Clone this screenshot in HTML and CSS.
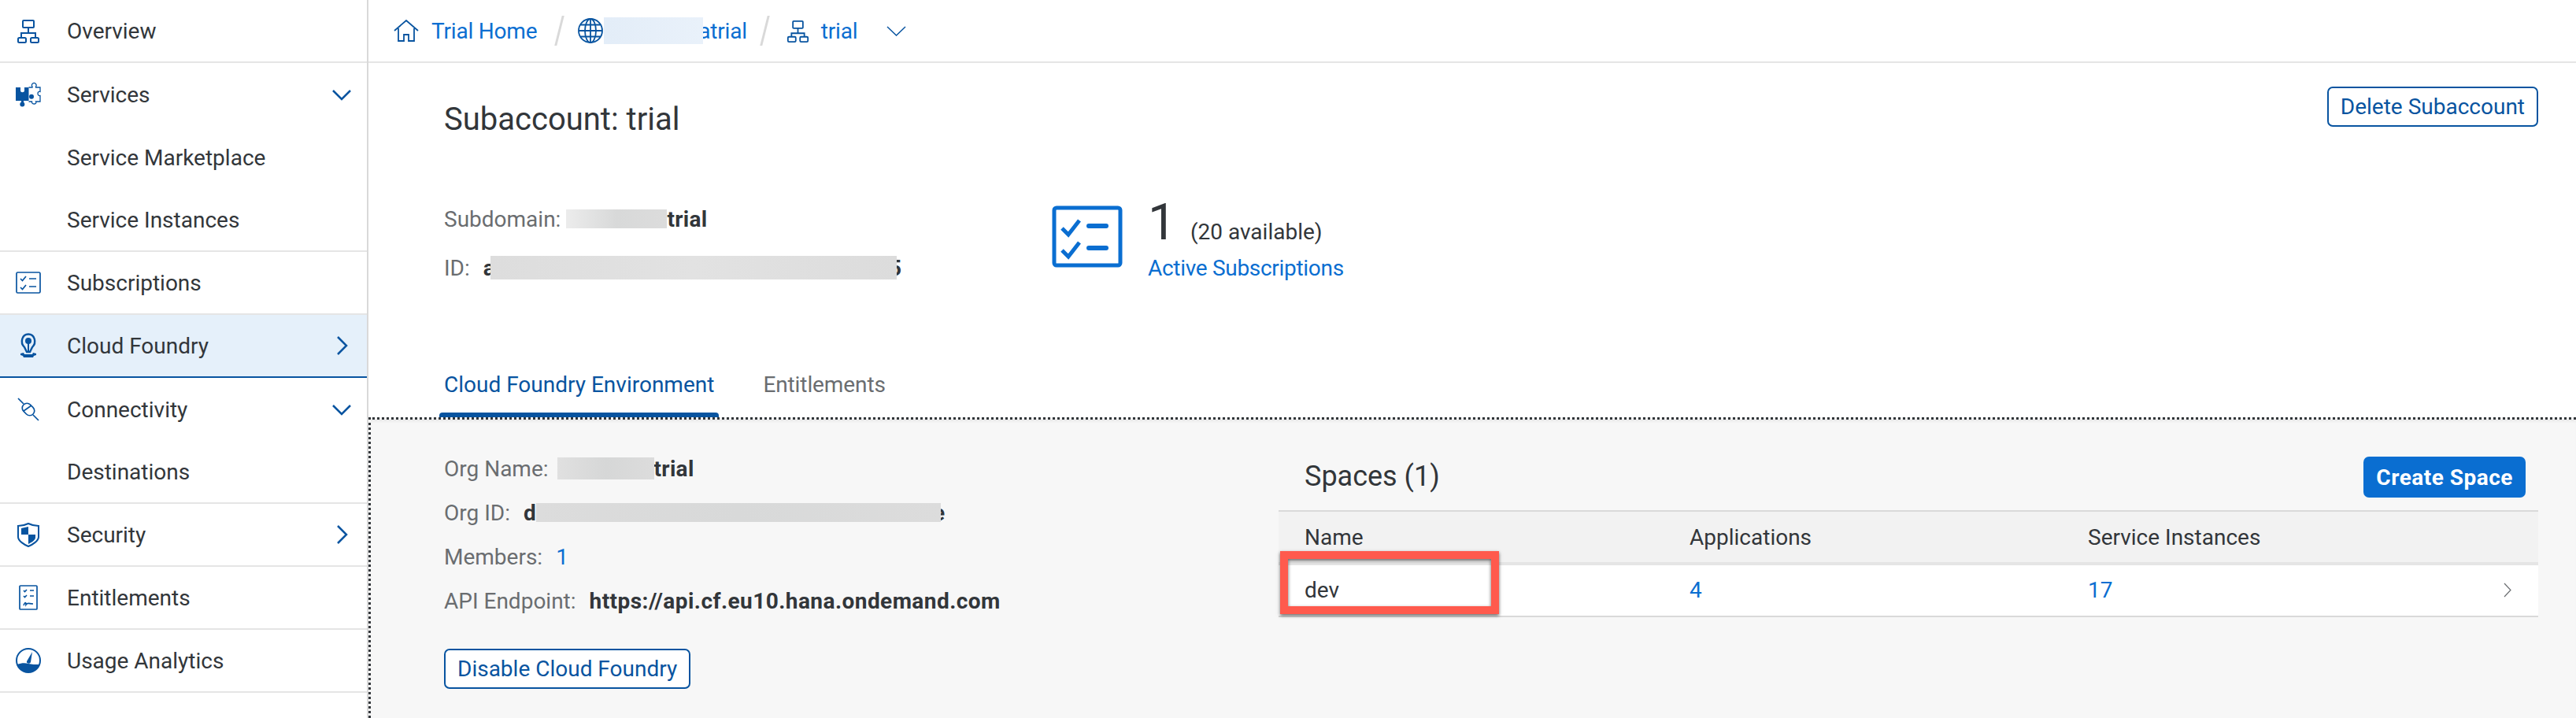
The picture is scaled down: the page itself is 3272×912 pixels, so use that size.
FILE: index.html
```html
<!DOCTYPE html>
<html lang="en">
<head>
    <meta charset="UTF-8">
    <title>Subaccount: trial</title>
    <link rel="stylesheet" href="styles.css">
</head>
<body>
    <nav class="sidebar">
        <a class="nav-row sep">
            <svg class="nav-icon" viewBox="0 0 32 32"><g fill="none" stroke="#0854a0" stroke-width="2"><rect x="9" y="3" width="14" height="9" rx="1"/><path d="M16 12v7M7 25v-6h18v6"/><rect x="3" y="25" width="10" height="6" rx="1.5"/><rect x="19" y="25" width="10" height="6" rx="1.5"/></g></svg>
            <span>Overview</span>
        </a>
        <a class="nav-row">
            <svg class="nav-icon" viewBox="0 0 32 32"><path fill="#0854a0" d="M0 7h6v4c0 3 5 3 5 0V7h5.500v17H10v2H7v-2H0z"/><circle cx="8.300" cy="28.500" r="3" fill="#0854a0"/><circle cx="20" cy="18.700" r="3" fill="#0854a0"/><path fill="none" stroke="#0854a0" stroke-width="1.300" d="M16.500 7H21V6a2.800 2.800 0 1 1 4.500 0v1H31v5.500c-4-1.500-4 6 0 5V25h-5.500c2 4-6 4-5 0h-4"/></svg>
            <span>Services</span>
            <svg class="nav-arrow" viewBox="0 0 24 24"><path d="M1 7l11 11L23 7"/></svg>
        </a>
        <a class="nav-row"><span class="no-icon">Service Marketplace</span></a>
        <a class="nav-row sep"><span class="no-icon">Service Instances</span></a>
        <a class="nav-row sep">
            <svg class="nav-icon" viewBox="0 0 32 32"><g fill="none" stroke="#0854a0" stroke-width="1.700"><rect x="1" y="3" width="30" height="26" rx="1.500"/><path d="M6 11l2.500 2.500L13 8M6 22l2.500 2.500L13 19M17 11h9M17 21h9"/></g></svg>
            <span>Subscriptions</span>
        </a>
        <a class="nav-row selected">
            <svg class="nav-icon" viewBox="0 0 32 32"><path fill="none" stroke="#0854a0" stroke-width="2.400" d="M11 18C5 12 8 1.500 16 1.500S27 12 21 18l-3 6h-4z"/><circle cx="16" cy="10" r="4" fill="#0854a0"/><path stroke="#0854a0" stroke-width="2" d="M16 12v12"/><path fill="#0854a0" d="M6 26l4-1 1 2h10l1-2 4 1v2l-3 1-1 2H10l-1-2-3-1z"/></svg>
            <span>Cloud Foundry</span>
            <svg class="nav-arrow" viewBox="0 0 24 24"><path d="M7 1l11 11L7 23"/></svg>
        </a>
        <a class="nav-row">
            <svg class="nav-icon" viewBox="0 0 32 32"><g fill="none" stroke="#0854a0" stroke-width="1.700"><path d="M3 2l7 7M22 23l7 7"/><rect x="7.500" y="10" width="17" height="12" rx="6" transform="rotate(45 16 16)"/><path d="M10 18L20 11"/></g></svg>
            <span>Connectivity</span>
            <svg class="nav-arrow" viewBox="0 0 24 24"><path d="M1 7l11 11L23 7"/></svg>
        </a>
        <a class="nav-row sep"><span class="no-icon">Destinations</span></a>
        <a class="nav-row sep">
            <svg class="nav-icon" viewBox="0 0 32 32"><path fill="none" stroke="#0854a0" stroke-width="2" d="M3 5c5 0 9-1 13-3 4 2 8 3 13 3v14c0 5-8 10-13 12C11 29 3 24 3 19z"/><path fill="#0854a0" d="M7 8l9-2v10H7zM16 16h9v4c0 3-5 6-9 8z"/></svg>
            <span>Security</span>
            <svg class="nav-arrow" viewBox="0 0 24 24"><path d="M7 1l11 11L7 23"/></svg>
        </a>
        <a class="nav-row sep">
            <svg class="nav-icon" viewBox="0 0 32 32"><g fill="none" stroke="#0854a0" stroke-width="1.700"><rect x="5" y="1" width="22" height="30" rx="1"/><path d="M10 7l1.500 1.500L14 6M10 14l1.500 1.500L14 13M18 7h5M18 14h5M10 26c2-5 3-4 3-1 2-3 4-1 9-1"/></g></svg>
            <span>Entitlements</span>
        </a>
        <a class="nav-row sep">
            <svg class="nav-icon" viewBox="0 0 32 32"><circle cx="16" cy="16" r="15" fill="none" stroke="#0854a0" stroke-width="2"/><path fill="#0854a0" d="M2 21c5-2 10-2 14-1s9 1 14 1c-2 6-8 10-14 10S4 27 2 21z"/><path fill="#0854a0" d="M21 5l-2 13c-1 3-6 2-5-1z"/></svg>
            <span>Usage Analytics</span>
        </a>
    </nav>

    <main class="content">
        <div class="crumbs">
            <svg class="crumb-icon home" viewBox="0 0 32 28"><g fill="none" stroke="#0854a0" stroke-width="1.800"><path d="M1 14L16 1l15 13M6 11v16h7v-8h6v8h7V11"/></g></svg>
            <a class="crumb-link">Trial Home</a>
            <i class="slash"></i>
            <svg class="crumb-icon globe" viewBox="0 0 32 32"><g fill="none" stroke="#0854a0" stroke-width="1.800"><circle cx="16" cy="16" r="15"/><ellipse cx="16" cy="16" rx="7" ry="15"/><path d="M16 1v30M1 16h30M3.500 8.500h25M3.500 23.500h25"/></g></svg>
            <span class="crumb-hidden"></span><a class="crumb-link cut">atrial</a>
            <i class="slash second"></i>
            <svg class="crumb-icon tree" viewBox="0 0 32 32"><g fill="none" stroke="#0854a0" stroke-width="2"><rect x="9" y="2" width="14" height="10" rx="1"/><path d="M16 12v7M7 24v-5h18v5"/><rect x="2" y="24" width="11" height="7" rx="1.500"/><rect x="19" y="24" width="11" height="7" rx="1.500"/></g></svg>
            <a class="crumb-link">trial</a>
            <svg class="crumb-down" viewBox="0 0 25 13"><path d="M1 1l11.500 11L24 1"/></svg>
        </div>

        <section class="summary">
            <div class="title-row">
                <h1>Subaccount: trial</h1>
                <button class="btn-outline">Delete Subaccount</button>
            </div>
            <div class="info-row">
                <div class="info-left">
                    <div class="info-line"><span class="label">Subdomain:</span><span class="blur sub"></span><b>trial</b></div>
                    <div class="info-line"><span class="label">ID:</span><b class="first">a</b><span class="blur id"></span><b class="tail">5</b></div>
                </div>
                <svg class="stat-icon" viewBox="0 0 90 79"><g fill="none" stroke="#0a6ed1" stroke-width="5"><rect x="3" y="3" width="84" height="73" rx="3"/><path d="M13 29l8 8 14-18M13 57l8 8 14-18"/></g><g stroke="#0a6ed1" stroke-width="6" stroke-linecap="round"><path d="M47 26h22M47 54h22"/></g></svg>
                <div class="stat">
                    <div class="stat-num"><span class="big">1</span><span class="avail">(20 available)</span></div>
                    <a class="link">Active Subscriptions</a>
                </div>
            </div>
            <div class="tabs">
                <a class="tab active">Cloud Foundry Environment</a>
                <a class="tab">Entitlements</a>
            </div>
        </section>

        <section class="panel">
            <div class="org">
                <div class="info-line"><span class="label">Org Name:</span><span class="blur org-name"></span><b>trial</b></div>
                <div class="info-line"><span class="label">Org ID:</span><b class="first">d</b><span class="blur org-id"></span><b class="tail">e</b></div>
                <div class="info-line"><span class="label">Members:</span><a class="link member">1</a></div>
                <div class="info-line"><span class="label">API Endpoint:</span><b class="api">https://api.cf.eu10.hana.ondemand.com</b></div>
                <button class="btn-outline disable">Disable Cloud Foundry</button>
            </div>
            <div class="spaces">
                <div class="spaces-head">
                    <h2>Spaces (1)</h2>
                    <button class="btn-primary">Create Space</button>
                </div>
                <div class="table">
                    <div class="table-row head-row">
                        <span>Name</span><span>Applications</span><span>Service Instances</span>
                    </div>
                    <div class="table-row body-row">
                        <span>dev</span><a class="link">4</a><a class="link">17</a>
                        <svg class="row-arrow" viewBox="0 0 10 19"><path d="M1 1l8 8.500L1 18"/></svg>
                    </div>
                    <div class="highlight"></div>
                </div>
            </div>
        </section>
    </main>
</body>
</html>
```

FILE: styles.css
```css
* {
    box-sizing: border-box;
}

html, body {
    height: 912px;
    overflow: hidden;
}

body {
    margin: 0;
    display: flex;
    font-family: Roboto, "Noto Sans", sans-serif;
    font-size: 28px;
    color: #32363a;
    background: #fff;
}

a {
    text-decoration: none;
}

.link {
    color: #0a6ed1;
}

/* left nav */
.sidebar {
    width: 468px;
    flex: none;
    border-right: 2px solid #d9d9d9;
}

.nav-row {
    height: 80px;
    display: flex;
    align-items: center;
    padding: 0 20px;
}

.nav-row.sep {
    border-bottom: 2px solid #e5e5e5;
}

.nav-row.selected {
    background: #e5f0fa;
    border-bottom: 2px solid #0854a0;
}

.nav-icon {
    width: 32px;
    height: 32px;
    margin-right: 33px;
    flex: none;
}

.no-icon {
    margin-left: 65px;
}

.nav-arrow {
    width: 24px;
    height: 24px;
    margin-left: auto;
    fill: none;
    stroke: #0854a0;
    stroke-width: 2.500;
}

/* breadcrumbs */
.content {
    flex: 1;
    display: flex;
    flex-direction: column;
    min-width: 0;
}

.crumbs {
    height: 80px;
    flex: none;
    display: flex;
    align-items: center;
    padding-left: 32px;
    border-bottom: 2px solid #e5e5e5;
}

.crumb-link {
    color: #0a6ed1;
    letter-spacing: -0.2px;
}

.crumb-icon.home {
    width: 32px;
    height: 28px;
    margin-right: 16px;
}

.crumb-icon.globe {
    width: 32px;
    height: 32px;
}

.crumb-icon.tree {
    width: 29px;
    height: 29px;
    margin-right: 15px;
}

.slash {
    width: 3px;
    height: 38px;
    margin: 0 22px 0 27px;
    background: #d9d9d9;
    transform: skewX(-14deg);
}

.slash.second {
    margin: 0 26px 0 21px;
}

.crumb-hidden {
    width: 126px;
    height: 34px;
    margin-left: 1px;
    background: linear-gradient(90deg, #e3edf8, #e9f1fa);
    position: relative;
}

.crumb-link.cut {
    margin-left: -6px;
}

.crumb-down {
    width: 25px;
    height: 13px;
    margin-left: 37px;
    fill: none;
    stroke: #0854a0;
    stroke-width: 1.500;
}

/* subaccount summary */
.summary {
    flex: none;
    padding: 0 48px 0 96px;
}

.title-row {
    height: 90px;
    display: flex;
    justify-content: space-between;
    align-items: flex-start;
}

h1 {
    margin: 52px 0 0;
    font-size: 40px;
    font-weight: 400;
    line-height: 40px;
}

.btn-outline {
    height: 51px;
    margin-top: 30px;
    padding: 0 15px;
    font: inherit;
    color: #0854a0;
    background: #fff;
    border: 2px solid #0854a0;
    border-radius: 7px;
}

.info-row {
    margin-top: 77px;
    display: flex;
    align-items: flex-start;
}

.info-left {
    width: 772px;
}

.info-line {
    height: 62px;
    display: flex;
    align-items: center;
}

.label {
    color: #6a6d70;
    margin-right: 7px;
}

b {
    font-weight: 700;
    letter-spacing: 0.3px;
}

.blur {
    height: 24px;
    position: relative;
    background: linear-gradient(90deg, #ececec, #d8d9d9 50%, #dcdcdc);
}

.blur.sub {
    width: 128px;
}

.blur.id {
    width: 516px;
    height: 30px;
    margin-left: -6px;
    background: linear-gradient(90deg, #dddddd, #e2e2e2 50%, #dcdcdc);
}

.first {
    margin-left: 10px;
}

.tail {
    margin-left: -10px;
}

.stat-icon {
    width: 90px;
    height: 79px;
    margin-top: 14px;
    flex: none;
}

.stat {
    margin-left: 32px;
    margin-top: 4px;
}

.stat-num {
    display: flex;
    align-items: baseline;
    height: 64px;
}

.big {
    font-size: 64px;
    line-height: 64px;
}

.avail {
    margin-left: 18px;
    line-height: 30px;
}

.stat .link {
    display: block;
    margin-top: 6px;
    line-height: 40px;
    letter-spacing: -0.3px;
}

.tabs {
    margin-top: 81px;
    display: flex;
    margin-left: -6px;
}

.tab {
    position: relative;
    height: 78px;
    display: flex;
    align-items: center;
    padding: 0 6px 6px;
    margin-right: 50px;
    color: #6a6d70;
    letter-spacing: -0.1px;
}

.tab.active {
    color: #0854a0;
    letter-spacing: 0;
}

.tab.active::after {
    content: "";
    position: absolute;
    left: 0;
    right: 0;
    bottom: 0;
    height: 6px;
    background: #0854a0;
    border-radius: 4px 4px 0 0;
}

/* org details + spaces */
.panel {
    flex: 1;
    display: flex;
    padding: 34px 48px 0 93px;
    background: #f7f7f7;
    border-top: 3px dotted #32363a;
    border-left: 3px dotted #32363a;
    box-shadow: inset 0 4px 4px -3px rgba(0, 0, 0, 0.1);
}

.org {
    width: 1060px;
    flex: none;
}

.org .info-line {
    height: 56px;
}

.blur.org-name {
    width: 123px;
    height: 28px;
    margin-left: 4px;
    background: linear-gradient(90deg, #e0e0e0, #d6d7d7 50%, #dcdcdc);
}

.blur.org-id {
    width: 514px;
    background: linear-gradient(90deg, #dcdcdc, #d8d9d9 50%, #dcdcdc);
}

.member {
    margin-left: 10px;
}

.api {
    margin-left: 10px;
    letter-spacing: 0.45px;
}

.disable {
    display: block;
    margin-top: 33px;
    padding: 0 15px;
}

.spaces {
    flex: 1;
    min-width: 0;
    margin-top: 13px;
}

.spaces-head {
    height: 52px;
    margin-bottom: 16px;
    padding: 0 16px 0 33px;
    display: flex;
    justify-content: space-between;
    align-items: center;
}

h2 {
    margin: 0 0 2px;
    font-size: 36px;
    font-weight: 400;
}

.btn-primary {
    height: 52px;
    padding: 0 16px;
    font: inherit;
    font-weight: 700;
    letter-spacing: 0.5px;
    color: #fff;
    background: #0a6ed1;
    border: 0;
    border-radius: 7px;
}

.table {
    position: relative;
}

.table-row {
    display: grid;
    grid-template-columns: 489px 506px 1fr auto;
    align-items: center;
    padding: 0 34px 0 33px;
}

.head-row {
    height: 70px;
    background: #f2f2f2;
    border-top: 2px solid #d9d9d9;
    border-bottom: 4px solid #e5e5e5;
}

.body-row {
    height: 66px;
    padding-bottom: 2px;
    background: #fff;
    border-bottom: 2px solid #d9d9d9;
}

.row-arrow {
    width: 10px;
    height: 19px;
    fill: none;
    stroke: #6a6d70;
    stroke-width: 1.200;
}

.highlight {
    position: absolute;
    left: 2px;
    top: 52px;
    width: 278px;
    height: 80px;
    border: 10px solid #ff5a4d;
    box-shadow: 0 2px 4px rgba(0, 0, 0, 0.6), inset 0 2px 4px rgba(0, 0, 0, 0.6);
}
```
